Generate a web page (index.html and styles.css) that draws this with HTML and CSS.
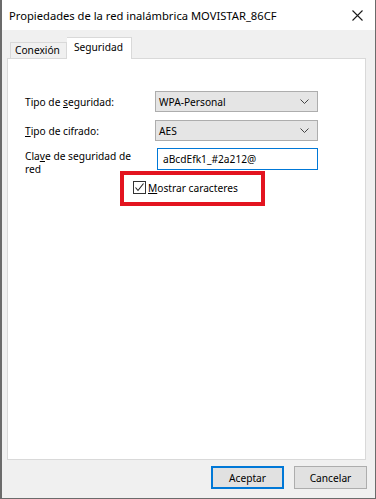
FILE: index.html
```html
<!DOCTYPE html>
<html>
  <head>
    <title>Propiedades de la red inalámbrica</title>
    <link rel="stylesheet" href="styles.css">
  </head>
  <body>
    <div class="window">
      <div class="titlebar">
        <span class="title">Propiedades de la red inalámbrica MOVISTAR_86CF</span>
        <svg class="close" width="11" height="11" viewBox="0 0 11 11">
          <path d="M0.5 0.5L10.5 10.5M10.5 0.5L0.5 10.5" stroke="#1a1a1a" stroke-width="1.1" fill="none"/>
        </svg>
      </div>

      <div class="dialog-body">
        <div class="tabs">
          <div class="tab">Conexión</div>
          <div class="tab active">Seguridad</div>
        </div>

        <div class="panel">
          <div class="form-grid">
            <div class="label">Tipo de <u>s</u>eguridad:</div>
            <div class="select">
              <span>WPA-Personal</span>
              <svg width="9" height="5" viewBox="0 0 9 5"><path d="M0.5 0.5L4.5 4.5L8.5 0.5" stroke="#444" fill="none"/></svg>
            </div>

            <div class="label"><u>T</u>ipo de cifrado:</div>
            <div class="select">
              <span>AES</span>
              <svg width="9" height="5" viewBox="0 0 9 5"><path d="M0.5 0.5L4.5 4.5L8.5 0.5" stroke="#444" fill="none"/></svg>
            </div>

            <div class="label label-top">Cla<u>v</u>e de seguridad de<br>red</div>
            <div class="textbox">aBcdEfk1_#2a212@</div>
          </div>

          <div class="check-row">
            <span class="checkbox">
              <svg width="11" height="11" viewBox="0 0 11 11"><path d="M1.5 5.5L4 8.5L9.5 1.5" stroke="#222" stroke-width="1.1" fill="none"/></svg>
            </span>
            <span><u>M</u>ostrar caracteres</span>
          </div>

          <div class="highlight"></div>
        </div>

        <div class="buttons">
          <button class="btn default">Aceptar</button>
          <button class="btn">Cancelar</button>
        </div>
      </div>
    </div>
  </body>
</html>
```

FILE: styles.css
```css
html,
body {
  margin: 0;
  padding: 0;
}
body {
  font-family: "Noto Sans", "Open Sans", sans-serif;
  font-size: 10.2px;
  color: #000;
  background: #f0f0f0;
}
.window {
  width: 376px;
  height: 499px;
  box-sizing: border-box;
  border: 1px solid #6b6b6b;
  border-top: none;
  border-left-width: 2px;
  background: #f0f0f0;
  display: flex;
  flex-direction: column;
}
.titlebar {
  height: 30px;
  background: #fff;
  display: flex;
  align-items: center;
  justify-content: space-between;
  padding: 0 12px 0 7px;
}
.title {
  font-size: 11.2px;
}
.dialog-body {
  flex: 1;
  padding: 8px 0 0 5px;
}
.tabs {
  display: flex;
  align-items: flex-end;
  height: 20px;
  padding-left: 3px;
  position: relative;
  z-index: 1;
}
.tab {
  height: 15px;
  line-height: 14px;
  padding: 0 6px 0 4px;
  border: 1px solid #d9d9d9;
  border-bottom: none;
  background: #f0f0f0;
}
.tab.active {
  height: 21px;
  line-height: 19px;
  background: #fff;
  margin-bottom: -1px;
  padding: 0 8px 0 7px;
  border-left: none;
}
.panel {
  position: relative;
  width: 357px;
  height: 400px;
  background: #fff;
  border: 1px solid #d9d9d9;
}
.form-grid {
  display: grid;
  grid-template-columns: 130px 163px;
  grid-template-rows: 21px 21px 22px;
  row-gap: 8px;
  padding: 32px 0 0 17px;
  align-items: center;
}
.label {
  width: 118px;
  line-height: 12px;
}
.label-top {
  align-self: start;
  line-height: 13px;
  margin-top: 1px;
}
.select {
  height: 19px;
  background: #e5e5e5;
  border: 1px solid #adadad;
  display: flex;
  align-items: center;
  justify-content: space-between;
  padding: 0 8px 0 3px;
}
.textbox {
  height: 20px;
  margin: -3px 0 0 2px;
  border: 1px solid #0078d7;
  display: flex;
  align-items: center;
  padding-left: 5px;
}
.check-row {
  display: flex;
  align-items: center;
  gap: 2px;
  height: 13px;
  margin: 10px 0 0 125px;
}
.checkbox {
  width: 11px;
  height: 11px;
  border: 1px solid #333;
  display: flex;
  align-items: center;
  justify-content: center;
}
.highlight {
  position: absolute;
  left: 112px;
  top: 112px;
  width: 137px;
  height: 27px;
  border: 4px solid #e3141f;
}
.buttons {
  display: flex;
  justify-content: flex-end;
  gap: 10px;
  width: 360px;
  margin-top: 6px;
}
.btn {
  width: 73px;
  height: 23px;
  font-family: inherit;
  font-size: 10.2px;
  background: #e1e1e1;
  border: 1px solid #adadad;
  padding: 0;
  color: #000;
}
.btn.default {
  border: 1px solid #0078d7;
  box-shadow: inset 0 0 0 1px #0078d7;
}
```
